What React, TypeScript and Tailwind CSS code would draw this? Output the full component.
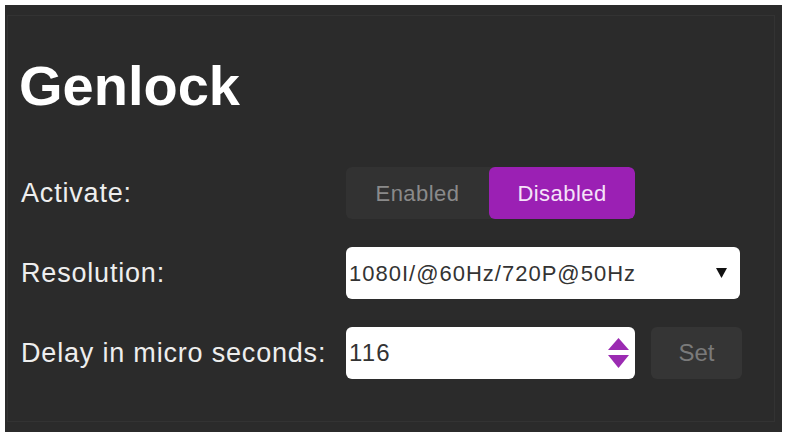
import type { ReactNode } from "react";

const font = { fontFamily: '"Liberation Sans", Arial, sans-serif' };

function Row({ label, children }: { label: string; children: ReactNode }) {
  return (
    <div className="grid grid-cols-[325px_1fr] items-center h-[52px]">
      <div className="text-[27px] tracking-[0.03em] text-[#eeeeee] leading-none">{label}</div>
      <div className="flex items-center h-full">{children}</div>
    </div>
  );
}

export default function App() {
  return (
    <div className="w-[787px] h-[437px] bg-white p-[5px]" style={font}>
      <div className="h-full bg-[#2b2b2b] pt-[10px] pl-[2px] pr-[7px] pb-[10px]">
        <div className="h-full border border-[#333333] pl-[13px]">
          <h1 className="mt-[42px] -ml-[2px] text-[56px] font-bold leading-none text-white">Genlock</h1>

          <div className="mt-[53px] flex flex-col gap-[28px]">
            <Row label="Activate:">
              <div className="flex h-full w-[289px] rounded-md bg-[#323232] overflow-hidden">
                <button className="w-[143px] h-full text-[22px] tracking-[0.02em] text-[#8a8a8a]">Enabled</button>
                <button className="flex-1 h-full rounded-md bg-[#9b20b4] text-[22px] tracking-[0.02em] text-[#f5e3f8]">
                  Disabled
                </button>
              </div>
            </Row>

            <Row label="Resolution:">
              <div className="flex items-center justify-between h-full w-[394px] rounded-md bg-white pl-[3px] pr-[13px]">
                <span className="text-[22px] tracking-[1px] text-[#333333]">1080I/@60Hz/720P@50Hz</span>
                <svg width="11" height="10" viewBox="0 0 11 10">
                  <path d="M0 0 L11 0 L5.5 10 Z" fill="#111111" />
                </svg>
              </div>
            </Row>

            <Row label="Delay in micro seconds:">
              <div className="flex items-center justify-between h-full w-[289px] rounded-md bg-white pl-[3px] pr-[6px]">
                <span className="text-[24px] tracking-[0.05em] text-[#333333]">116</span>
                <svg width="21" height="30" viewBox="0 0 21 30">
                  <path d="M10.5 0 L21 12 L0 12 Z" fill="#9b2bb2" />
                  <path d="M0 17 L21 17 L10.5 30 Z" fill="#9b2bb2" />
                </svg>
              </div>
              <button className="ml-[16px] h-full w-[91px] rounded-md bg-[#353535] text-[24px] text-[#7a7a7a]">
                Set
              </button>
            </Row>
          </div>
        </div>
      </div>
    </div>
  );
}
